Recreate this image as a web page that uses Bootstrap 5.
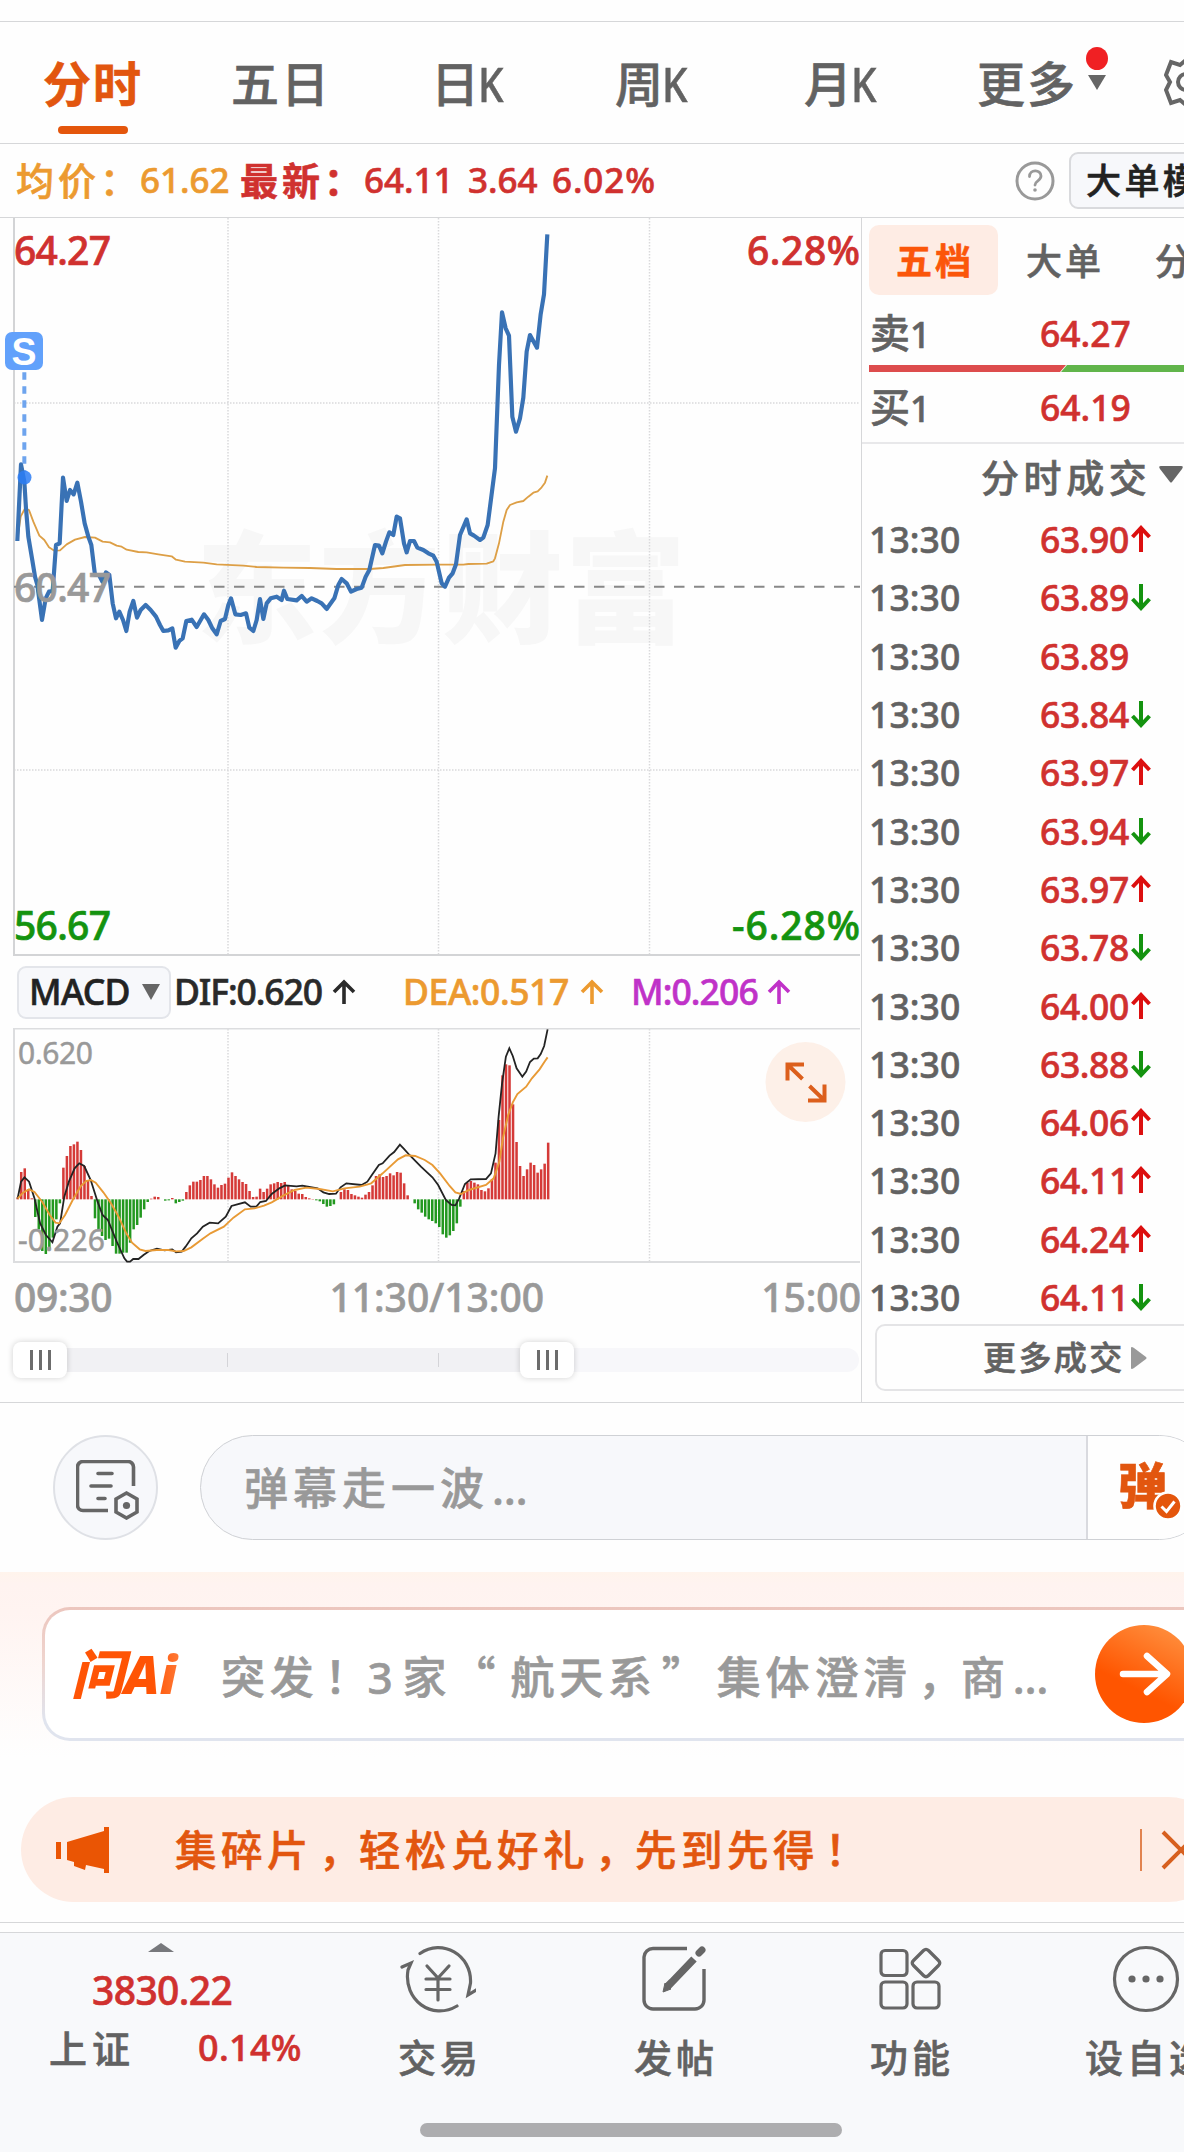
<!DOCTYPE html>
<html lang="zh-CN">
<head>
<meta charset="utf-8">
<meta name="viewport" content="width=device-width, initial-scale=1">
<title>分时行情</title>
<link href="https://cdn.jsdelivr.net/npm/bootstrap@5.3.0/dist/css/bootstrap.min.css" rel="stylesheet">
<style>
:root{--rise:#d0312f;--fall:#14930f;--brand:#e2560f;--ink:#626262;--mute:#999;--rule:#d6d7d9;--avg:#ec9a30}
html,body{overflow:hidden}
body{width:1184px;height:2152px;margin:0;background:#fefefe;color:var(--ink);font-family:"Noto Sans","Noto Sans CJK SC",sans-serif;font-weight:500;font-size:36px;line-height:1;white-space:nowrap;-webkit-text-stroke:.6px currentColor}
svg{display:block;flex:none}
.cell{flex:none;white-space:nowrap}
.rise{color:var(--rise)}.fall{color:var(--fall)}.avg{color:var(--avg)}.brand{color:var(--brand)}.mute{color:var(--mute)}
.screen{width:1184px;height:2152px;overflow:hidden}
.top-gap{height:22px;border-bottom:1px solid var(--rule)}
.period-tabs{height:122px;border-bottom:1px solid var(--rule);font-size:48px;letter-spacing:2px;padding-left:43px}
.period-tabs .cell{height:121px;line-height:124px}
.latin-k{display:inline-block;transform:scaleX(.84);transform-origin:0 50%;margin-left:-3px}
.tab-now::after{content:"";position:absolute;left:15px;top:104px;width:70px;height:8px;border-radius:4px;background:#e4560c}
.quote-line{height:74px;border-bottom:1px solid var(--rule);padding-left:16px;line-height:72px;font-size:35px}
.zh{font-size:38px;letter-spacing:4px}
.big-mode{height:57px;width:150px;margin-left:14px;border:2px solid #d9dadd;border-radius:9px;background:#f7f8fb;color:#222;font-size:35px;letter-spacing:3.4px;line-height:54px;padding-left:15px}
.main-area{height:1185px;border-bottom:1px solid var(--rule)}
.chart-side{width:862px;border-right:1px solid var(--rule)}
.macd-head{height:72px;padding-left:17px;color:#2a2a2a;font-size:35.5px}
.macd-btn{width:154px;height:53px;background:#f7f8fb;border:2px solid #e3e5ea;border-radius:9px;padding-left:10px;color:#222}
.axis{height:68px;font-size:39px;line-height:66px;padding:0 0 0 14px;color:var(--mute)}
.slider-track{margin-left:40px;width:819px;height:24px;margin-top:16px;border-radius:12px;background:#f7f7fa}
.slider-range{width:507px;height:24px;background:#f1f1f4}
.tick{top:5px;width:1px;height:14px;background:#d4d4d8}
.handle{top:-6px;width:54px;height:36px;border-radius:8px;background:#fff;box-shadow:0 0 6px rgba(0,0,0,.18);gap:6px}
.handle i{width:3px;height:20px;background:#6c6c6c}
.deal-side{width:322px;padding-left:7px}
.book-tabs{height:78px;padding-top:7px;font-size:36px;letter-spacing:3px;line-height:73px}
.book-now{width:129px;height:70px;border-radius:10px;background:#feece4;color:#fb560a;font-weight:700;padding-left:27px}
.book-row{line-height:74px;height:69px;font-size:35.5px}
.side-name{width:171px;padding-left:1px}
.side-name b{font-weight:500;font-size:40px}
.depth{height:7px}
.trade-title{height:68px;line-height:66px;border-top:2px solid #e8e8ea;margin-left:-7px;padding-left:119px;letter-spacing:4.6px;font-size:38px}
.trade-row{height:58.3px;line-height:58px;font-size:35.5px}
.more-deals{margin:-2px 0 0 6px;height:67px;width:330px;border:2px solid #e4e4e6;border-radius:10px;font-size:33px;letter-spacing:2.4px;padding-left:106px}
.talk{height:169px;padding:32px 0 0 53px}
.round-btn{width:105px;height:105px;border:2px solid #dfe1e6;border-radius:50%;background:#f7f8fb}
.talk-box{margin-left:42px;width:1012px;height:105px;border:1px solid #cfd1d5;border-radius:53px;background:#f7f8fb;overflow:hidden}
.talk-hint{width:885px;padding-left:43px;font-size:44px;letter-spacing:5px;line-height:104px;color:var(--mute)}
.dots{margin-left:3px}
.talk-switch{border-left:2px solid #d9dadf;background:#fefefe;padding-left:30px;font-size:49px;font-weight:900;line-height:98px;letter-spacing:0;width:130px}
.ask{height:211px;padding:35px 0 0 42px;background:linear-gradient(#fff4ec 0,#fff3f0 12px,#fff4f1 40px,#fefefe 185px)}
.ask-box{width:1200px;height:134px;border:3px solid transparent;border-radius:28px;background:linear-gradient(#fff,#fff) padding-box,linear-gradient(#ecc6be,#efd4ce 40%,#e0e4ee 85%) border-box;padding-left:26px}
.ask-text{font-size:44px;letter-spacing:4.8px;color:var(--mute);width:727px;padding-top:3px}
.cjk{font-family:"Noto Sans CJK SC",sans-serif;display:inline-block}
.stop{font-family:"Noto Sans CJK SC",sans-serif;display:inline-block;width:46px;text-indent:6px}
.ask-text .stop{width:49px}
.logo-ai{width:126px;font-weight:900;font-style:italic;font-size:53px;letter-spacing:0;background:linear-gradient(90deg,#ff5405 65%,#ff9257);-webkit-background-clip:text;color:transparent;-webkit-text-stroke:0;line-height:64px}
.notice{margin:14px 0 0 21px;width:1200px;height:105px;border-radius:53px;background:#feece4;padding-left:35px;font-size:41.5px;letter-spacing:4.5px}
.gap-lines{margin-top:20px;height:11px;border-top:1px solid var(--rule);border-bottom:1px solid var(--rule)}
.dock{height:219px;background:#f8f9fb}
.dock-index{width:320px}
.dock-item{width:236px;padding-top:12px;font-size:38px;letter-spacing:4px}
.dock-item span{margin-top:25px;line-height:38px;padding-left:4px}
.home-bar{left:420px;bottom:15px;width:422px;height:14px;border-radius:7px;background:#adadaf}
</style>
</head>
<body>
<div class="screen d-flex flex-column position-relative">
  <div class="top-gap flex-shrink-0"></div>

  <nav class="period-tabs d-flex flex-shrink-0">
    <div class="cell brand position-relative tab-now fw-bold" style="width:188px">分时</div>
    <div class="cell" style="width:200px">五日</div>
    <div class="cell" style="width:184px">日<span class="latin-k">K</span></div>
    <div class="cell" style="width:189px">周<span class="latin-k">K</span></div>
    <div class="cell" style="width:173px">月<span class="latin-k">K</span></div>
    <div class="cell" style="width:108px">更多</div>
    <svg width="26" height="120" viewBox="0 0 26 120"><ellipse cx="12" cy="36.500" rx="11" ry="11.500" fill="#f02023"/><path d="M3 53h18l-9 15z" fill="#666"/></svg>
    <svg class="ms-auto" style="margin-right:-24px" width="44" height="120" viewBox="0 0 44 120" fill="none" stroke="#666" stroke-width="4"><path d="M2 53l5-13 9 3 6-5 6 5 9-3 5 13-5 7 5 8-5 13-9-3-6 5-6-5-9 3-5-13 4-8z"/><circle cx="22" cy="60" r="8"/></svg>
  </nav>

  <div class="quote-line d-flex flex-shrink-0">
    <div class="cell avg zh" style="width:124px">均价：</div><div class="cell avg" style="width:100px">61.62</div>
    <div class="cell rise zh fw-bold" style="width:124px">最新：</div><div class="cell rise" style="width:104px">64.11</div>
    <div class="cell rise" style="width:84px">3.64</div><div class="cell rise" style="letter-spacing:.9px">6.02%</div>
    <div class="d-flex align-items-center ms-auto" style="margin-right:-35px">
      <svg width="40" height="40" viewBox="0 0 40 40" fill="none" stroke="#999" stroke-width="3"><circle cx="20" cy="20" r="18"/><path d="M14.500 15.500c0-7.500 11.500-7.500 11.500-.5 0 5-6 4.500-6 9" stroke-width="2.800" stroke-linecap="round"/><circle cx="20" cy="29" r="1.800" fill="#999" stroke="none"/></svg>
      <div class="big-mode">大单模式</div>
    </div>
  </div>

  <div class="main-area d-flex flex-shrink-0">
    <div class="chart-side flex-shrink-0">
      <svg id="price" width="860" height="738" viewBox="0 218 860 738">
        <g font-family="Noto Sans CJK SC" font-weight="900" font-size="121" fill="#f7f7f7"><text x="196" y="633" textLength="490">东方财富</text></g>
        <g stroke="#d9d9db" stroke-width="1.500" stroke-dasharray="1.500 1.500"><path d="M228 218V955M438.500 218V955M649.500 218V955M14 403H860M14 770H860" fill="none"/></g>
        <path d="M14 218V955H860" fill="none" stroke="#d3d4d6" stroke-width="2"/>
        <path d="M14 586.700H860" stroke="#888" stroke-width="2" stroke-dasharray="10.500 9.500"/>
        <g transform="translate(0 215) scale(.33333)" fill="none" stroke-linejoin="round">
          <polyline stroke="#dd9f46" stroke-width="5.500" points="52,975 62,905 75,880 87,885 100,920 118,962 133,975 147,997 163,1007 180,1006 200,988 225,974 255,966 285,968 308,980 330,982 350,992 365,995 380,1004 415,1011 440,1012 475,1018 515,1024 528,1034 555,1040 610,1043 650,1048 730,1052 770,1056 850,1058 930,1059 1010,1062 1110,1062 1150,1059 1215,1050 1320,1049 1390,1049 1405,1047 1460,1046 1480,1039 1485,1030 1497,985 1510,920 1520,885 1530,870 1550,862 1570,858 1585,845 1600,833 1613,829 1625,817 1635,803 1642,782"/>
          <path d="M73 472V770" stroke="#6ea4ee" stroke-width="12" stroke-dasharray="22 20"/>
          <polyline stroke="#3972b5" stroke-width="12.500" points="52,978 63,748 73,800 78,880 85,965 96,1030 105,1085 112,1110 126,1215 137,1150 147,1130 158,1128 168,990 179,985 189,788 200,858 210,825 221,838 232,803 243,860 254,925 265,965 274,990 285,1080 297,1080 307,1100 318,1072 328,1080 338,1165 348,1210 358,1190 369,1215 379,1248 389,1190 400,1158 411,1208 422,1185 437,1170 452,1185 468,1205 480,1230 490,1248 505,1246 517,1240 527,1298 538,1278 548,1270 559,1218 575,1214 590,1236 612,1198 625,1215 637,1240 650,1258 662,1218 675,1212 685,1170 693,1150 706,1198 722,1200 738,1195 748,1238 760,1248 770,1215 780,1152 790,1212 800,1165 812,1150 830,1145 845,1155 852,1127 862,1152 890,1156 905,1143 920,1160 935,1150 952,1158 965,1165 980,1182 990,1168 1003,1150 1015,1110 1025,1092 1040,1105 1053,1130 1070,1122 1085,1118 1097,1085 1108,1065 1125,990 1137,992 1147,1015 1158,980 1168,952 1180,960 1190,905 1200,910 1212,985 1220,1012 1230,978 1242,978 1252,998 1270,1005 1285,1015 1300,1022 1310,1040 1325,1105 1335,1115 1347,1088 1358,1075 1368,1048 1380,960 1400,913 1410,955 1422,962 1440,975 1450,968 1463,930 1485,760 1497,450 1506,292 1517,340 1527,362 1537,605 1548,650 1560,610 1570,548 1580,410 1590,360 1611,398 1622,298 1632,238 1642,58"/>
        </g>
        <circle cx="24.500" cy="477.500" r="7" fill="#2b7df5" opacity=".85"/>
        <rect x="5" y="332" width="38" height="38" rx="7" fill="#62a1fb"/>
        <text x="24" y="365" text-anchor="middle" font-family="Liberation Sans" font-weight="700" font-size="39" fill="#fff" textLength="25" lengthAdjust="spacingAndGlyphs">S</text>
        <g font-size="39" font-weight="500" stroke-width=".7">
          <text x="14" y="265" fill="#d0312f" stroke="#d0312f" textLength="97">64.27</text>
          <text x="747" y="265" fill="#d0312f" stroke="#d0312f" textLength="113">6.28%</text>
          <text x="14" y="602" fill="#999" stroke="#999" textLength="97">60.47</text>
          <text x="14" y="940" fill="#14930f" stroke="#14930f" textLength="97">56.67</text>
          <text x="732" y="940" fill="#14930f" stroke="#14930f" textLength="128">-6.28%</text>
        </g>
      </svg>

      <div class="macd-head d-flex align-items-center">
        <div class="macd-btn d-flex align-items-center cell" style="margin-right:3px"><span style="width:113px;letter-spacing:-.7px">MACD</span><svg width="18" height="16" viewBox="0 0 18 16"><path d="M0 0h18L9 16z" fill="#666"/></svg></div>
        <div class="cell" style="width:158px;letter-spacing:-1.1px">DIF:0.620</div>
        <svg style="width:71px" width="71" height="26" viewBox="0 0 71 26" fill="none" stroke="#2a2a2a" stroke-width="3.600"><path d="M12 25V3M2 13L12 3l10 10"/></svg>
        <div class="cell avg" style="width:177px;letter-spacing:-.4px">DEA:0.517</div>
        <svg width="51" height="26" viewBox="0 0 51 26" fill="none" stroke="#ec9a30" stroke-width="3.600"><path d="M12 25V3M2 13L12 3l10 10"/></svg>
        <div class="cell" style="width:136px;color:#c032c8;letter-spacing:-.9px">M:0.206</div>
        <svg width="24" height="26" viewBox="0 0 24 26" fill="none" stroke="#c032c8" stroke-width="3.600"><path d="M12 25V3M2 13L12 3l10 10"/></svg>
      </div>

      <svg width="860" height="236" viewBox="0 1028 860 236">
        <path d="M228 1029V1261M438.500 1029V1261M649.500 1029V1261" stroke="#d9d9db" stroke-width="1.500" stroke-dasharray="1.500 1.500" fill="none"/>
        <path d="M860 1028.500H14V1262H860" fill="none" stroke="#dcdddf" stroke-width="2"/>
        <g transform="translate(0 940) scale(.38267 .33333)" fill="none">
          <g id="bars" stroke="none"></g>
          <polyline vector-effect="non-scaling-stroke" stroke="#232323" stroke-width="1.800" points="46,776 55,725 64,712 76,725 90,775 105,850 120,885 137,907 150,860 157,850 168,770 180,725 195,685 207,670 220,678 237,720 255,785 268,825 282,840 305,905 325,955 332,965 340,965 348,957 362,957 375,945 390,933 410,926 430,931 450,928 460,937 475,935 485,920 500,895 515,880 530,860 548,848 570,850 590,830 605,798 620,793 640,787 655,800 670,800 680,786 695,783 710,762 730,745 745,736 775,739 790,737 830,745 845,757 860,762 878,761 890,742 905,730 945,735 960,725 970,708 990,675 1000,670 1018,647 1030,636 1045,614 1055,626 1070,645 1100,680 1130,712 1145,735 1165,780 1180,795 1190,796 1200,775 1215,732 1230,718 1270,717 1283,700 1295,640 1303,530 1312,430 1322,350 1331,325 1340,348 1350,385 1365,410 1375,395 1385,366 1395,356 1405,355 1413,342 1422,318 1431,268"/>
          <polyline vector-effect="non-scaling-stroke" stroke="#e89a35" stroke-width="1.900" points="46,776 60,758 76,748 90,756 110,785 130,825 145,848 155,850 170,825 190,780 210,740 225,723 237,720 250,728 270,757 290,790 310,830 330,880 345,908 365,928 380,933 410,930 440,930 460,934 480,933 500,922 530,896 550,880 585,860 610,833 640,808 665,805 690,797 710,787 740,767 770,750 800,743 835,747 870,754 900,745 940,740 970,730 1000,700 1040,658 1060,646 1085,648 1110,660 1130,675 1150,700 1175,738 1190,757 1205,762 1225,750 1270,735 1290,715 1305,665 1315,590 1328,525 1340,487 1352,462 1375,440 1390,415 1410,388 1423,365 1431,352"/>
        </g>
        <g font-size="30" fill="#999" stroke="#999" stroke-width=".5" font-weight="400"><text x="18" y="1064" textLength="75">0.620</text><text x="18" y="1251" textLength="87">-0.226</text></g>
        <circle cx="805.500" cy="1082" r="40" fill="#fdf0e8"/>
        <g fill="none" stroke="#dc5f1c" stroke-width="4"><path d="M804 1064.500h-16.500v16M788 1065l14.500 14M808 1100.500h16.500v-16M824 1100l-14.500-14"/></g>
      </svg>

      <div class="axis d-flex justify-content-between"><span style="letter-spacing:-.3px">09:30</span><span>11:30/13:00</span><span>15:00</span></div>
      <div class="slider-track position-relative">
        <div class="slider-range"></div>
        <i class="tick position-absolute" style="left:187px"></i><i class="tick position-absolute" style="left:398px"></i>
        <div class="handle position-absolute d-flex justify-content-center align-items-center" style="left:-27px"><i></i><i></i><i></i></div>
        <div class="handle position-absolute d-flex justify-content-center align-items-center" style="left:480px"><i></i><i></i><i></i></div>
      </div>
    </div>

    <div class="deal-side flex-shrink-0">
      <div class="book-tabs d-flex"><div class="book-now cell">五档</div><div class="cell" style="margin-left:28px;width:129px">大单</div><div class="cell">分价</div></div>
      <div class="book-row d-flex"><div class="cell side-name"><b>卖</b>1</div><div class="cell rise">64.27</div></div>
      <svg class="depth" width="322" height="7" viewBox="0 0 322 7"><path d="M0 0h197l-6 7H0z" fill="#dd4c4d"/><path d="M198 0h124v7H192z" fill="#61b54b"/></svg>
      <div class="book-row d-flex" style="height:70px;line-height:70px"><div class="cell side-name"><b>买</b>1</div><div class="cell rise">64.19</div></div>
      <div class="trade-title d-flex"><span style="width:178px">分时成交</span><svg width="24" height="66" viewBox="0 0 24 66"><path d="M2 22h20q3 0 1 3L13 38q-1 1-2 0L1 25q-2-3 1-3z" fill="#666"/></svg></div>
      <div id="trades"></div>
      <div class="more-deals d-flex align-items-center"><span style="width:148px">更多成交</span><svg width="16" height="22" viewBox="0 0 16 22"><path d="M0 1q0-2 3 0l12 9q1 1 0 2L3 21q-3 2-3 0z" fill="#999"/></svg></div>
    </div>
  </div>

  <div class="talk d-flex flex-shrink-0">
    <div class="round-btn d-flex align-items-center justify-content-center flex-shrink-0">
      <svg style="margin:4px 0 0 4px" width="64" height="60" viewBox="0 0 64 60" fill="none" stroke="#666" stroke-width="3.600" stroke-linecap="round"><path d="M32 50.500H7a5.500 5.500 0 0 1-5.500-5.500V7A5.500 5.500 0 0 1 7 1.500h45A5.500 5.500 0 0 1 57.500 7V26" stroke-linecap="butt"/><path d="M22 13.500h14M15 26h20M22 38.500h7"/><path d="M50.500 33L61 39v13l-10.500 6L40 52V39z" stroke-linecap="butt"/><circle cx="50.500" cy="45.500" r="3.600" fill="#666" stroke="none"/></svg>
    </div>
    <div class="talk-box d-flex flex-shrink-0">
      <div class="talk-hint cell">弹幕走一波<span class="dots">…</span></div>
      <div class="talk-switch cell brand position-relative">弹<svg class="position-absolute" style="left:65px;top:55px" width="30" height="30" viewBox="0 0 30 30"><circle cx="15" cy="15" r="13.500" fill="#e4560c" stroke="#fff" stroke-width="2.600"/><path d="M8.500 15.500l5 5 8-10" fill="none" stroke="#fff" stroke-width="3"/></svg></div>
    </div>
  </div>

  <div class="ask flex-shrink-0">
    <div class="ask-box d-flex align-items-center">
      <div class="logo-ai cell">问Ai</div>
      <div class="cell" style="width:24px"></div>
      <div class="ask-text cell">突发<span class="stop">！</span>3<span style="margin-left:5px">家</span><span class="cjk" style="width:59px">“</span>航天系<span class="cjk" style="width:60px;text-indent:5px">”</span>集体澄清<span class="stop">，</span>商<span class="dots">…</span></div>
      <svg width="98" height="98" viewBox="0 0 98 98" style="margin-left:147px"><defs><linearGradient id="go" x1=".8" y1="0" x2=".35" y2=".9"><stop offset="0" stop-color="#ff9140"/><stop offset=".75" stop-color="#ff5500"/></linearGradient></defs><circle cx="49" cy="49" r="49" fill="url(#go)"/><path d="M28 49h43M52 31l20 18-20 18" fill="none" stroke="#fff" stroke-width="6.500" stroke-linecap="round" stroke-linejoin="round"/></svg>
    </div>
  </div>

  <div class="notice d-flex align-items-center flex-shrink-0 brand">
    <svg width="54" height="46" viewBox="0 0 54 46" fill="#ea5504"><path d="M0 15h5v17H0zM11 15l37-11V0h5v46h-5v-4l-18-4-1 5-11-4v-4l-7-2z"/></svg>
    <div class="cell" style="margin-left:65px;width:965px">集碎片<span class="stop">，</span>轻松兑好礼<span class="stop">，</span>先到先得<span class="stop">！</span></div>
    <svg width="62" height="44" viewBox="0 0 62 44" fill="none" stroke="#d7601f"><path d="M1 1v42" stroke-width="1.500"/><path d="M23 4l36 36M59 4L23 40" stroke-width="4"/></svg>
  </div>

  <div class="gap-lines flex-shrink-0"></div>

  <footer class="dock d-flex flex-shrink-0 position-relative">
    <div class="dock-index flex-shrink-0 d-flex flex-column">
      <svg width="320" height="19" viewBox="0 0 320 19"><path d="M148 19l13-9 13 9z" fill="#77787c"/></svg>
      <div class="rise" style="padding-left:92px;font-size:39px;height:57px;line-height:76px;letter-spacing:-.6px">3830.22</div>
      <div class="d-flex" style="height:60px;line-height:78px;padding-left:49px"><span class="cell" style="width:149px;font-size:38px;letter-spacing:5px">上证</span><span class="cell rise" style="font-size:36px;letter-spacing:.3px">0.14%</span></div>
    </div>
    <div class="dock-item flex-shrink-0 d-flex flex-column align-items-center"><svg width="76" height="68" viewBox="0 0 76 68" fill="none" stroke="#666" stroke-width="3.200" stroke-linecap="round"><path d="M20 8.500C42-7 72 10 70.500 38L68 50l8-5M57 61C32 76 3 55 8 25l3-7-9 4"/><path d="M27 21l11 12 11-12M38 33v22M26 34h24M26 44.500h24"/></svg><span>交易</span></div>
    <div class="dock-item flex-shrink-0 d-flex flex-column align-items-center"><svg width="66" height="68" viewBox="0 0 66 68" fill="none" stroke="#666" stroke-width="3.400"><path d="M46 3.500H12A9 9 0 0 0 3 12v43a9 9 0 0 0 9 9h42a9 9 0 0 0 9-9V24"/><path d="M53 14L31 37l-5 5" stroke-width="7.500"/><path d="M22 47l2-9 6 6z" fill="#666" stroke-width="1"/><path d="M58 8l3-3" stroke-width="7" stroke-linecap="round"/></svg><span>发帖</span></div>
    <div class="dock-item flex-shrink-0 d-flex flex-column align-items-center"><svg width="64" height="68" viewBox="0 0 64 68" fill="none" stroke="#666" stroke-width="3.200"><rect x="3" y="5.500" width="26" height="25" rx="4"/><rect x="3" y="37" width="26" height="26" rx="4"/><rect x="35" y="37" width="26" height="26" rx="4"/><path d="M45.500 5.500q2.500-2.500 5 0l10 10q2.500 2.500 0 5l-10 10q-2.500 2.500-5 0l-10-10q-2.500-2.500 0-5z"/></svg><span>功能</span></div>
    <div class="dock-item flex-shrink-0 d-flex flex-column align-items-center"><svg width="68" height="68" viewBox="0 0 68 68" fill="none" stroke="#666" stroke-width="3.200"><circle cx="34" cy="34" r="31.500"/><g fill="#666" stroke="none"><circle cx="20" cy="34" r="3.600"/><circle cx="34" cy="34" r="3.600"/><circle cx="48" cy="34" r="3.600"/></g></svg><span>设自选</span></div>
    <div class="home-bar position-absolute"></div>
  </footer>
</div>

<script src="https://cdn.jsdelivr.net/npm/bootstrap@5.3.0/dist/js/bootstrap.bundle.min.js"></script>
<script>
// MACD histogram, one value per traded minute
const macd=[6,82,93,30,3,-53,-90,-155,-164,-148,-115,-60,-12,95,130,160,165,173,148,100,55,10,-57,-95,-110,-122,-118,-140,-163,-163,-160,-160,-130,-90,-77,-55,-30,-8,2,8,7,0,-4,-3,4,-12,-8,-4,22,42,53,53,58,70,70,60,45,35,43,47,65,81,70,60,52,46,25,7,8,32,22,32,45,48,52,49,52,42,30,25,17,16,7,3,1,-3,-6,-14,-22,-20,-15,0,22,30,28,16,12,8,5,14,22,42,70,75,67,70,78,72,82,80,48,12,0,-12,-30,-40,-52,-60,-65,-72,-83,-105,-115,-108,-95,-72,-22,25,50,55,50,45,28,24,33,60,110,238,372,405,402,285,172,100,70,90,110,103,80,90,107,170];
document.getElementById('bars').innerHTML=macd.map((v,i)=>`<rect x="${43+i*9.18}" y="${v>0?778-v:778}" width="6.6" height="${Math.abs(v)}" fill="${v>0?'#d53a38':'#22981f'}"/>`).join('');

// Latest trades: price and direction
const trades=[['63.90',1],['63.89',-1],['63.89',0],['63.84',-1],['63.97',1],['63.94',-1],['63.97',1],['63.78',-1],['64.00',1],['63.88',-1],['64.06',1],['64.11',1],['64.24',1],['64.11',-1]];
const up='<path d="M10 27V3M1.500 12L10 3l8.500 9" stroke="#dc0f0f"/>',down='<path d="M10 1v24M1.500 16l8.500 9 8.500-9" stroke="#14930f"/>';
document.getElementById('trades').innerHTML=trades.map(([p,d])=>`<div class="trade-row d-flex align-items-center"><span class="cell" style="width:171px;letter-spacing:.1px">13:30</span><span class="cell rise" style="width:91px;letter-spacing:-.4px">${p}</span><svg width="20" height="28" viewBox="0 0 20 28" fill="none" stroke-width="4">${d>0?up:d<0?down:''}</svg></div>`).join('');
</script>
</body>
</html>
